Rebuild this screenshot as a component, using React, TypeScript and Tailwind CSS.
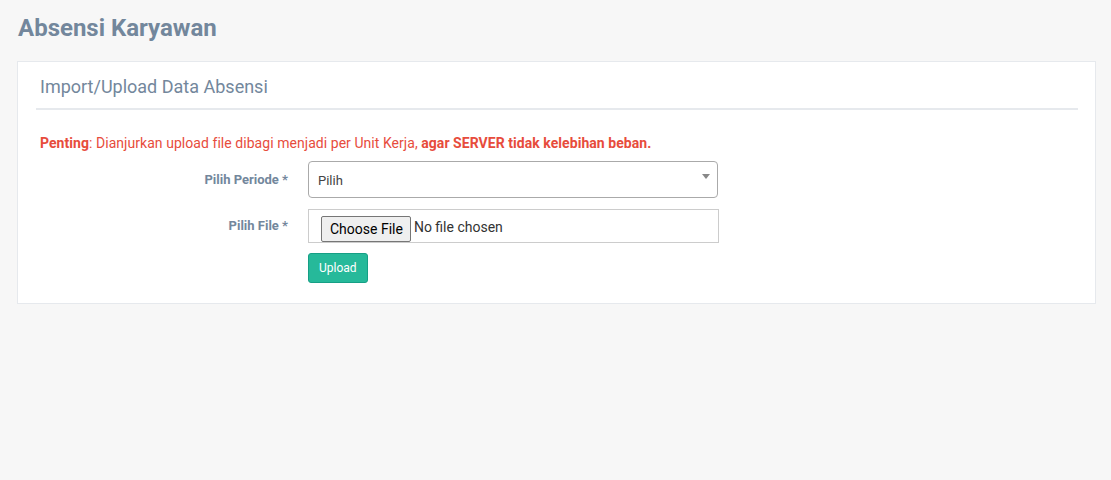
import { useState } from "react";

const App = () => {
  const [periode] = useState("Pilih");

  return (
    <div className="min-h-screen bg-[#f7f7f7] pl-[17px] pr-[15px] font-['Roboto',sans-serif] text-[#73879c]">
      {/* Page title */}
      <h3 className="pt-[13px] pl-px text-[24px] leading-[30px] font-bold text-[#73879c]">
        Absensi Karyawan
      </h3>

      {/* Panel */}
      <div className="mt-[18px] border border-[#e6e9ed] bg-white pl-[18px] pr-[17px] pb-[20px]">
        <div className="border-b-2 border-[#e6e9ed] pt-[15px] pb-[11px] pl-[4px]">
          <h2 className="text-[18px] leading-[20px] font-normal text-[#73879c]">
            Import/Upload Data Absensi
          </h2>
        </div>

        <p className="mt-[23px] pl-[4px] text-[14px] leading-[20px] tracking-[0.05px] text-[#e74c3c]">
          <span className="font-bold">Penting</span>: Dianjurkan upload file dibagi menjadi per Unit Kerja,{" "}
          <span className="font-bold">agar SERVER tidak kelebihan beban.</span>
        </p>

        <div className="mt-[8px] flex flex-col">
          {/* Periode */}
          <div className="flex items-center gap-[20px]">
            <label className="w-[252px] text-right text-[13px] font-bold text-[#73879c]">
              Pilih Periode *
            </label>
            <div className="relative h-[37px] w-[410px] rounded-[4px] border border-[#aaaaaa] bg-white">
              <span className="block pl-[9px] pt-[10px] text-[13px] leading-[18px] text-[#444444]">
                {periode}
              </span>
              <span className="absolute top-[12px] right-[7px] h-0 w-0 border-x-[4px] border-t-[5px] border-x-transparent border-t-[#888888]" />
            </div>
          </div>

          {/* File */}
          <div className="mt-[11px] flex items-center gap-[20px]">
            <label className="w-[252px] text-right text-[13px] font-bold text-[#73879c]">
              Pilih File *
            </label>
            <div className="flex h-[34px] w-[411px] items-end border border-[#cccccc] bg-white pl-[12px]">
              <span className="flex h-[26px] items-center rounded-[2px] border border-[#767676] bg-[#efefef] pl-[8px] pr-[7px] text-[14px] text-black">
                Choose File
              </span>
              <span className="mb-[4px] ml-[3px] text-[14px] text-[#333333]">No file chosen</span>
            </div>
          </div>

          {/* Submit */}
          <div className="mt-[10px] pl-[272px]">
            <button className="h-[30px] rounded-[3px] border border-[#169f85] bg-[#26b99a] px-[10px] text-[12px] text-white">
              Upload
            </button>
          </div>
        </div>
      </div>
    </div>
  );
};

export default App;
